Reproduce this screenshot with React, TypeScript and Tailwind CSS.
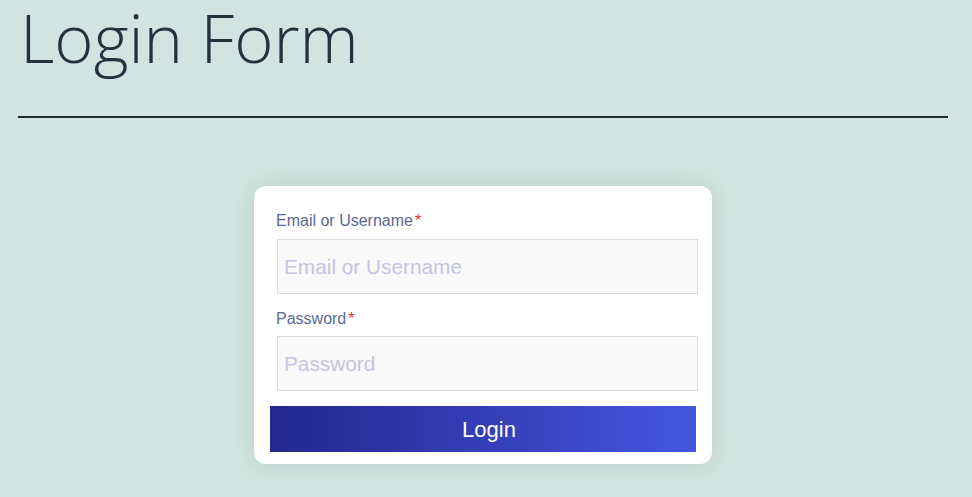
export default function App() {
  return (
    <div className="min-h-screen overflow-hidden bg-[#d1e4df]" style={{ fontFamily: 'Arial, "Liberation Sans", sans-serif' }}>
      <div className="ml-[18px] mr-[24px]">
        {/* Header */}
        <h1
          className="pl-[2px] text-[67px] font-light leading-[74px] text-[#26313d]"
          style={{ fontFamily: '"Open Sans", sans-serif' }}
        >
          Login Form
        </h1>
        <div className="mt-[42px] h-[2px] bg-[#1f2a35]" />

        {/* Card */}
        <div className="mx-auto mt-[68px] w-[458px] rounded-[12px] bg-white px-[16px] pt-[24px] pb-[12px] shadow-[0_0_24px_rgba(30,80,70,0.12)]">
          <label className="ml-[6px] block text-[16px] leading-[22px] text-[#5b6890]">
            Email or Username<span className="ml-[2px] text-[#e0303e]">*</span>
          </label>
          <input
            type="text"
            placeholder="Email or Username"
            className="mt-[7px] ml-[7px] block h-[55px] w-[421px] border border-[#dcdbe6] bg-[#f9f9f9] px-[6px] text-[20.8px] outline-none placeholder:text-[#c6c3e4]"
          />
          <label className="mt-[14px] ml-[6px] block text-[16px] leading-[22px] text-[#5b6890]">
            Password<span className="ml-[2px] text-[#e0303e]">*</span>
          </label>
          <input
            type="password"
            placeholder="Password"
            className="mt-[6px] ml-[7px] block h-[55px] w-[421px] border border-[#dcdbe6] bg-[#f9f9f9] px-[6px] text-[20.8px] outline-none placeholder:text-[#c6c3e4]"
          />
          <button className="mt-[15px] block h-[46px] w-[426px] bg-gradient-to-r from-[#23278e] to-[#4656e2] pl-[12px] text-[22px] text-white">
            Login
          </button>
        </div>
      </div>
    </div>
  );
}
